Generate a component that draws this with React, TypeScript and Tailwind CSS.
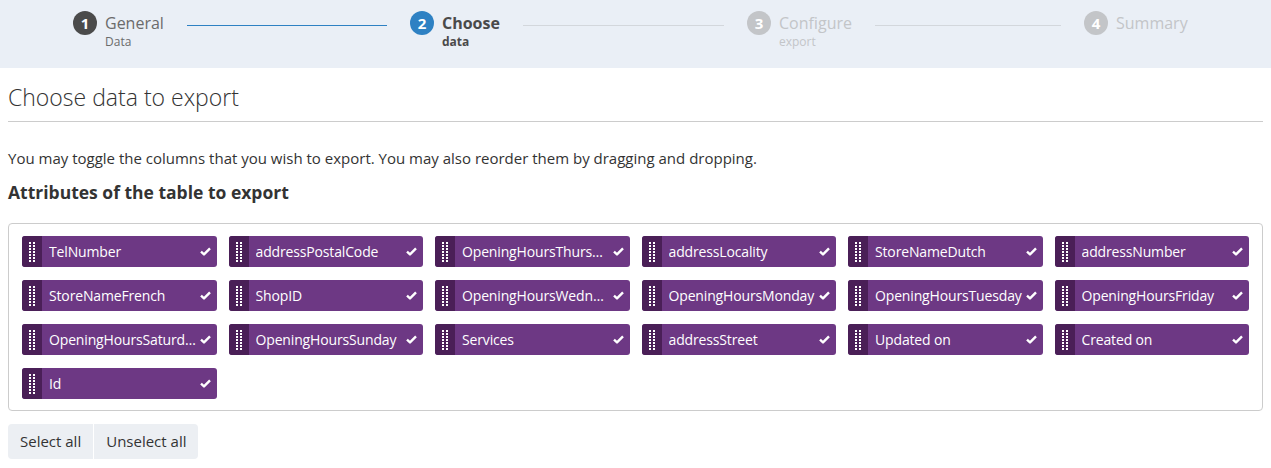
import React from 'react';

const steps = [
  { n: 1, title: 'General', sub: 'Data', state: 'done' },
  { n: 2, title: 'Choose', sub: 'data', state: 'active' },
  { n: 3, title: 'Configure', sub: 'export', state: 'todo' },
  { n: 4, title: 'Summary', sub: '', state: 'todo' },
];

const attributes = [
  'TelNumber',
  'addressPostalCode',
  'OpeningHoursThursday',
  'addressLocality',
  'StoreNameDutch',
  'addressNumber',
  'StoreNameFrench',
  'ShopID',
  'OpeningHoursWednesday',
  'OpeningHoursMonday',
  'OpeningHoursTuesday',
  'OpeningHoursFriday',
  'OpeningHoursSaturday',
  'OpeningHoursSunday',
  'Services',
  'addressStreet',
  'Updated on',
  'Created on',
  'Id',
];

const Grip = () => (
  <svg width="6" height="20" viewBox="0 0 6 20" className="block">
    {Array.from({ length: 7 }).map((_, i) => (
      <React.Fragment key={i}>
        <rect x="0" y={i * 3} width="2" height="2" fill="#ffffff" />
        <rect x="4" y={i * 3} width="2" height="2" fill="#ffffff" />
      </React.Fragment>
    ))}
  </svg>
);

const Check = () => (
  <svg width="11" height="9" viewBox="0 0 11 9" className="block shrink-0 ml-[2px]">
    <path d="M1 4.6 L4 7.4 L10 1.4" fill="none" stroke="#ffffff" strokeWidth="2.4" strokeLinejoin="round" />
  </svg>
);

const Step = ({ step, last }: { step: (typeof steps)[number]; last: boolean }) => {
  const circle =
    step.state === 'done' ? 'bg-[#4b4b4b]' : step.state === 'active' ? 'bg-[#2e81c3]' : 'bg-[#c3c5c8]';
  const text =
    step.state === 'done'
      ? 'text-[#6b6b6b] font-normal'
      : step.state === 'active'
        ? 'text-[#4a4a4a] font-bold'
        : 'text-[#c3c5c8] font-normal';
  const line = step.state === 'done' ? 'bg-[#2e81c3]' : 'bg-[#d3d7dc]';
  return (
    <div className={last ? 'flex items-start' : 'flex items-start w-[337px] shrink-0'}>
      <div
        className={`${circle} w-6 h-6 rounded-full text-white text-[15px] font-bold flex items-center justify-center shrink-0`}
      >
        {step.n}
      </div>
      <div className="ml-2">
        <div className={`${text} text-[16px] leading-[24px]`}>{step.title}</div>
        <div className={`${text} text-[12px] leading-[14px]`}>{step.sub}</div>
      </div>
      {!last && <div className={`${line} flex-1 h-px mt-[14px] ml-[23px] mr-[23px]`} />}
    </div>
  );
};

const App = () => (
  <div
    className="w-[1271px] h-[468px] bg-white text-[#333] overflow-hidden"
    style={{ fontFamily: '"Open Sans", "Noto Sans", sans-serif' }}
  >
    {/* Wizard steps */}
    <div className="h-[68px] bg-[#eaeff6] pl-[73px] pt-[11px] flex">
      {steps.map((s, i) => (
        <Step key={s.n} step={s} last={i === steps.length - 1} />
      ))}
    </div>

    <div className="px-2">
      <h1 className="mt-[16px] text-[23px] leading-[26px] font-light text-[#333]">Choose data to export</h1>
      <div className="mt-[11px] border-t border-[#cccccc]" />
      <p className="mt-[26px] text-[15px] leading-[20px]">
        You may toggle the columns that you wish to export. You may also reorder them by dragging and dropping.
      </p>
      <h3 className="mt-[14px] text-[17.5px] leading-[20px] font-bold">Attributes of the table to export</h3>

      <div className="mt-[21px] border border-[#cccccc] rounded px-[13px] pt-3 pb-[11px] grid grid-cols-6 gap-x-3 gap-y-[13px]">
        {attributes.map((a) => (
          <div key={a} className="h-[31px] flex rounded-[3px] overflow-hidden bg-[#6d3884] text-white">
            <div className="w-5 bg-[#4a1f57] flex items-center justify-center shrink-0">
              <Grip />
            </div>
            <div className="flex-1 min-w-0 flex items-center pl-[7px] pr-[6px]">
              <span className="flex-1 min-w-0 truncate text-[14px] tracking-[-0.15px] leading-[31px]">{a}</span>
              <Check />
            </div>
          </div>
        ))}
      </div>

      <div className="mt-[13px] flex">
        <button className="h-[35px] px-3 bg-[#eceff3] text-[15px] text-[#333] rounded-l">Select all</button>
        <button className="h-[35px] px-3 ml-px bg-[#eceff3] text-[15px] text-[#333] rounded-r">Unselect all</button>
      </div>
    </div>
  </div>
);

export default App;
